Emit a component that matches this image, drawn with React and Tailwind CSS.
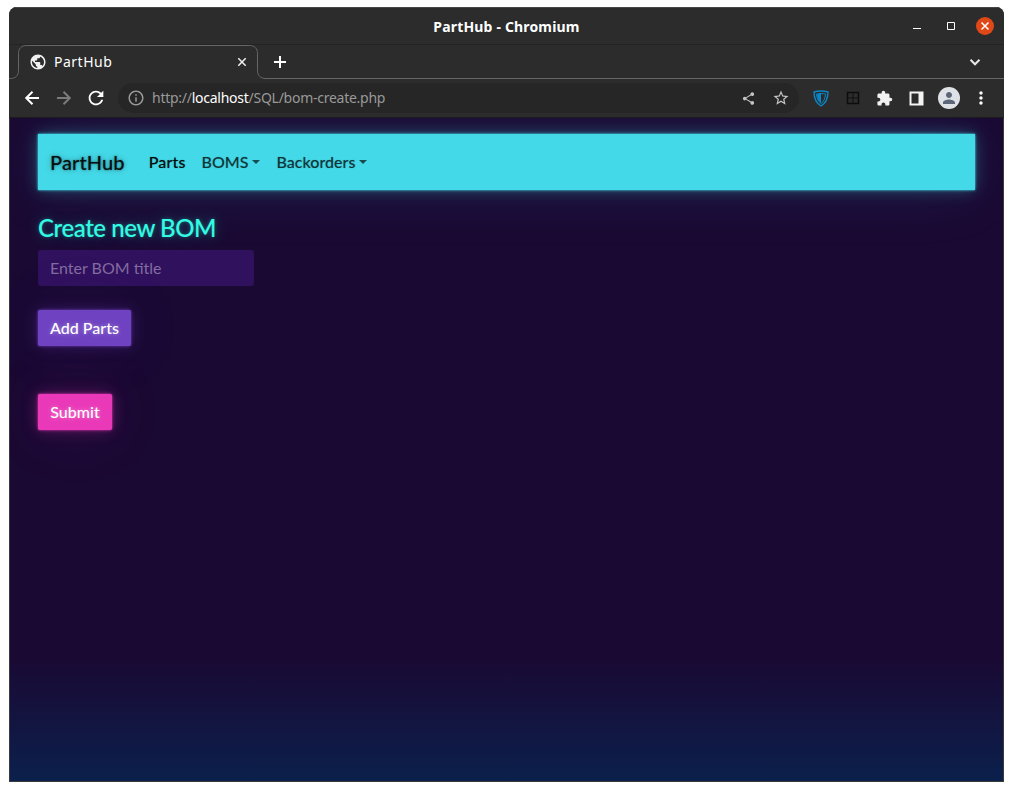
import {
  MdInfoOutline, MdShare, MdStarBorder, MdRefresh,
  MdExtension, MdPerson, MdMoreVert, MdPublic,
} from "react-icons/md";

function TitleBar() {
  return (
    <div className="relative flex h-[38px] shrink-0 items-center justify-end gap-[16px] border-t border-b border-t-[#474747] border-b-[#242424] bg-[#2c2c2c] pr-[10px]">
      <div className="absolute inset-x-0 top-[9px] text-center text-[14px] leading-5 font-bold tracking-[0.17px] text-white">PartHub - Chromium</div>
      <svg width="18" height="18" viewBox="0 0 18 18"><path d="M5 11.5h8" stroke="#fff" /></svg>
      <svg width="18" height="18" viewBox="0 0 18 18"><path d="M5.5 5.5h7v7h-7z" fill="none" stroke="#fff" /></svg>
      <svg width="18" height="18" viewBox="0 0 18 18">
        <circle cx="9" cy="9" r="9" fill="#e04917" />
        <path d="M5.5 5.5l7 7M12.5 5.5l-7 7" stroke="#fff" strokeWidth="1.5" />
      </svg>
    </div>
  );
}

function TabStrip() {
  return (
    <div className="flex h-[34px] shrink-0 text-white">
      <div className="relative flex h-[34px] w-[258px] items-center pl-[20px]">
        <svg className="absolute top-0 left-0" width="258" height="34" viewBox="0 0 258 34" fill="none">
          <path d="M0 33.5H1.500C6.500 33.5 9.500 30.500 9.500 25.500V8.500C9.500 3.500 12.500.5 17.500.5H240.500C245.500.5 248.500 3.500 248.500 8.500V25.500C248.500 30.500 251.500 33.500 257 33.500H258" stroke="#666" />
        </svg>
        <MdPublic size={18} className="text-[#f1f1f1]" />
        <span className="ml-[7px] w-[177px] text-[14px] leading-5 tracking-[0.5px]">PartHub</span>
        <svg className="ml-[4px]" width="14" height="14" viewBox="0 0 14 14"><path d="M3.300 3.300l7.400 7.400M10.700 3.300l-7.400 7.400" stroke="#f1f1f1" strokeWidth="1.500" /></svg>
      </div>
      <div className="flex flex-1 items-center border-b border-[#666] pl-[4px]">
        <svg width="18" height="18" viewBox="0 0 18 18"><path d="M9 3v12M3 9h12" stroke="#fff" strokeWidth="2" /></svg>
        <svg className="mr-[22px] ml-auto" width="14" height="14" viewBox="0 0 14 14"><path d="M2.500 4.800L7 9.300l4.500-4.500" fill="none" stroke="#e8e8e8" strokeWidth="2" /></svg>
      </div>
    </div>
  );
}

function Toolbar() {
  return (
    <div className="flex h-[39px] shrink-0 items-center border-b border-[#1c1c1c] pl-[13px] text-white">
      <svg width="20" height="20" viewBox="0 0 20 20" fill="none" stroke="#fff" strokeWidth="2"><path d="M17 10H4.500M10.500 3.700L4.200 10l6.300 6.300" /></svg>
      <svg className="ml-[12px]" width="20" height="20" viewBox="0 0 20 20" fill="none" stroke="#7b7b7b" strokeWidth="2"><path d="M3 10h12.500M9.500 3.700l6.300 6.300-6.300 6.300" /></svg>
      <MdRefresh size={22} className="ml-[11px]" />
      <div className="ml-[11px] flex h-[30px] w-[681px] items-center rounded-full bg-[#262626] pl-[9px]">
        <MdInfoOutline size={18} className="text-[#999]" />
        <span className="ml-[7px] text-[14px] leading-5 tracking-[-0.26px] whitespace-nowrap text-[#999]">
          http://<span className="text-white">localhost</span>/SQL/bom-create.php
        </span>
        <MdShare size={15} className="mr-[16px] ml-auto text-[#c4c4c4]" />
        <MdStarBorder size={18} className="mr-[9px] text-[#c4c4c4]" />
      </div>
      <svg className="ml-[14px]" width="16" height="17" viewBox="0 0 16 17" fill="none">
        <path d="M8 1C10.500 1 13 1.300 15 2C15 8.500 13 13 8 16C3 13 1 8.500 1 2C3 1.300 5.500 1 8 1Z" stroke="#0b86c6" strokeWidth="1.400" />
        <path d="M8 3.500C9.500 3.500 11 3.700 12.500 4.100C12.200 8.500 11 11.300 8 13.500C5 11.300 3.800 8.500 3.500 4.100C5 3.700 6.500 3.500 8 3.500Z" stroke="#0b86c6" />
        <path d="M8 4C6.500 4 5.200 4.100 4 4.500C4.300 8.500 5.500 11 8 13Z" fill="#0b86c6" />
      </svg>
      <svg className="ml-[17px]" width="14" height="14" viewBox="0 0 14 14">
        <path d="M1.500 1.500h11v11h-11z" fill="none" stroke="#0c0c0c" strokeWidth="1.500" />
        <path d="M7 1.500v11M1.500 7h11" stroke="#111" />
      </svg>
      <MdExtension size={17} className="ml-[16px] text-[#f1f1f1]" />
      <svg className="ml-[16px]" width="15" height="15" viewBox="0 0 15 15"><path fillRule="evenodd" fill="#f3f3f3" d="M.5.5h14v14H.5zM2.500 2.500v10h7v-10z" /></svg>
      <div className="ml-[14px] flex size-[22px] items-center justify-center rounded-full bg-[#dee1e6] text-[#5c6678]">
        <MdPerson size={18} />
      </div>
      <MdMoreVert size={20} className="ml-[11px]" />
    </div>
  );
}

function Caret() {
  return <span className="ml-[4px] inline-block border-x-[4px] border-t-[4px] border-x-transparent border-t-current align-[4px]" />;
}

function Page() {
  return (
    <main className="flex flex-1 flex-col items-start overflow-hidden border-x border-b border-[#3a3a3a] bg-[linear-gradient(180deg,#1a0933_0px,#1a0933_537px,#0b204c_664px)] px-[28px] pt-[16px] font-['Lato',sans-serif] text-[16px] leading-6">
      <nav className="flex h-[56px] w-full shrink-0 items-center bg-[#44d9e8] pl-[12px] font-medium text-black/65 shadow-[0_0_2px_rgba(68,217,232,0.9),0_0_4px_rgba(68,217,232,0.4),0_0_16px_rgba(68,217,232,0.3),0_0_64px_rgba(68,217,232,0.1)]">
        <span className="mr-[16px] text-[20px] leading-[30px] tracking-[0.12px] text-black/90 [text-shadow:0_0_2px_rgba(0,0,0,0.5),0_0_6px_rgba(0,0,0,0.3)]">PartHub</span>
        <span className="px-2 tracking-[0.15px] text-black/90 [text-shadow:0_0_1px_rgba(0,0,0,0.5)]">Parts</span>
        <span className="px-2 [text-shadow:0_0_1px_rgba(0,0,0,0.4)]">BOMS<Caret /></span>
        <span className="px-2 tracking-[0.05px] [text-shadow:0_0_1px_rgba(0,0,0,0.4)]">Backorders<Caret /></span>
      </nav>
      <h1 className="mt-[23px] text-[24px] leading-[29px] font-medium tracking-[-0.42px] text-[#32fbe2] [text-shadow:0_0_1px_rgba(50,251,226,0.3),0_0_4px_rgba(50,251,226,0.3),0_0_16px_rgba(50,251,226,0.3)]">Create new BOM</h1>
      <input placeholder="Enter BOM title" className="mt-[8px] h-[36px] w-[216px] rounded-[3px] bg-[#30115e] px-[12px] pb-[2px] text-white placeholder:text-[#836c9e]" />
      <button className="mt-[24px] h-[36px] w-[93px] rounded-[2px] bg-[#6f42c1] font-medium text-white shadow-[0_0_2px_rgba(111,66,193,0.9),0_0_4px_rgba(111,66,193,0.4),0_0_16px_rgba(111,66,193,0.3),0_0_64px_rgba(111,66,193,0.1)] [text-shadow:0_0_4px_rgba(255,255,255,0.4)]">Add Parts</button>
      <button className="mt-[48px] h-[36px] w-[74px] rounded-[2px] bg-[#ea39b8] font-medium text-white shadow-[0_0_2px_rgba(234,57,184,0.9),0_0_4px_rgba(234,57,184,0.4),0_0_16px_rgba(234,57,184,0.3),0_0_64px_rgba(234,57,184,0.1)] [text-shadow:0_0_4px_rgba(255,255,255,0.4)]">Submit</button>
    </main>
  );
}

export default function App() {
  return (
    <div className="h-[791px] w-[1013px] bg-white px-[9px] pt-[7px] pb-[9px]">
      <div className="flex h-[775px] w-[995px] flex-col overflow-hidden rounded-t-[8px] bg-[#2c2c2c] font-['Noto_Sans',sans-serif]">
        <TitleBar />
        <TabStrip />
        <Toolbar />
        <Page />
      </div>
    </div>
  );
}
